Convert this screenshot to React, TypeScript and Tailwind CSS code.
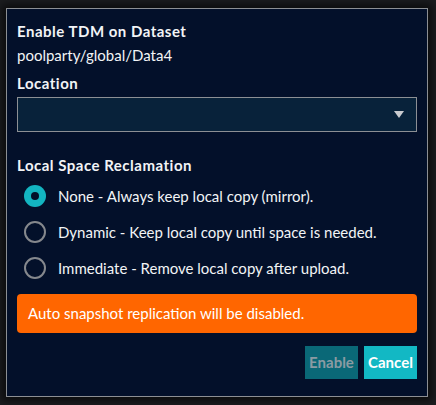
import { useState } from 'react'

const options = [
  { id: 'none', label: 'None - Always keep local copy (mirror).' },
  { id: 'dynamic', label: 'Dynamic - Keep local copy until space is needed.' },
  { id: 'immediate', label: 'Immediate - Remove local copy after upload.' },
]

function Radio({ checked }: { checked: boolean }) {
  if (checked) {
    return (
      <span className="flex h-[22px] w-[22px] shrink-0 items-center justify-center rounded-full bg-[#13b5c1]">
        <span className="h-[8px] w-[8px] rounded-full bg-[#03102a]" />
      </span>
    )
  }
  return <span className="h-[22px] w-[22px] shrink-0 rounded-full border-2 border-[#85888d]" />
}

export default function App() {
  const [mode, setMode] = useState('none')

  return (
    <div
      className="h-[405px] w-[436px] bg-[#1c1d20] pt-[8px] pl-[6px]"
      style={{ fontFamily: 'Lato, "Noto Sans", sans-serif' }}
    >
      <div className="flex h-[389px] w-[422px] flex-col border border-[#8c8f94] bg-[#03102a] px-[10px] text-[#f2f4f6] shadow-[0_0_8px_4px_rgba(0,0,0,0.6)]">
        <div className="mt-[12px] text-[15px] font-bold leading-[20px] tracking-[0.5px]">Enable TDM on Dataset</div>
        <div className="mt-[4px] text-[15px] leading-[20px]">poolparty/global/Data4</div>

        <div className="mt-[8px] text-[15px] font-bold leading-[20px] tracking-[0.5px]">Location</div>
        <button className="mt-[4px] flex h-[35px] w-[400px] items-center justify-end border border-[#8c8f94] bg-[#08223a] pr-[12px]">
          <svg width="10" height="8" viewBox="0 0 10 8">
            <path d="M0 0 H10 L5 7 Z" fill="#c9cbcf" />
          </svg>
        </button>

        <div className="mt-[23px] text-[15px] font-bold leading-[20px] tracking-[0.5px]">Local Space Reclamation</div>
        <div className="mt-[10px] flex flex-col gap-[14px] pl-[7px]">
          {options.map((o) => (
            <label
              key={o.id}
              className="flex cursor-pointer items-center gap-[12px] text-[15px] leading-[22px]"
              onClick={() => setMode(o.id)}
            >
              <Radio checked={mode === o.id} />
              <span>{o.label}</span>
            </label>
          ))}
        </div>

        <div className="mt-[15px] flex h-[39px] w-[400px] items-center rounded-[4px] bg-[#ff6600] pl-[11px] text-[15px] text-white">
          Auto snapshot replication will be disabled.
        </div>

        <div className="mt-[13px] flex w-[400px] justify-end gap-[6px]">
          <button className="h-[33px] w-[53px] bg-[#0a6877] text-[15px] font-bold text-[#8a9ba3]">Enable</button>
          <button className="h-[33px] w-[53px] bg-[#12b8c4] text-[15px] font-bold text-white">Cancel</button>
        </div>
      </div>
    </div>
  )
}
